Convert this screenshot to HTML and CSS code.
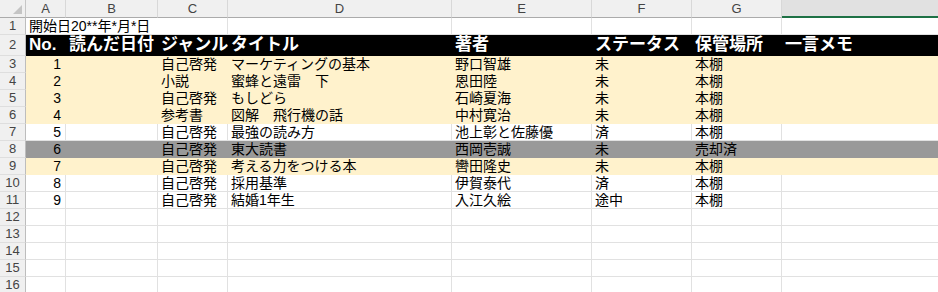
FILE: index.html
```html
<!DOCTYPE html>
<html lang="ja">
<head>
    <meta charset="UTF-8">
    <title>読書リスト</title>
    <link rel="stylesheet" href="styles.css">
</head>
<body>
    <div class="sheet" id="sheet">
        <div class="row col-head">
            <div class="corner"><span class="tri"></span></div>
            <div class="ch">A</div>
            <div class="ch">B</div>
            <div class="ch">C</div>
            <div class="ch">D</div>
            <div class="ch">E</div>
            <div class="ch">F</div>
            <div class="ch">G</div>
            <div class="ch selected"></div>
        </div>
        <div class="row">
            <div class="rh">1</div>
            <div class="cell span3">開始日20**年*月*日</div>
            <div class="cell"></div>
            <div class="cell"></div>
            <div class="cell"></div>
            <div class="cell"></div>
            <div class="cell last"></div>
        </div>
        <div class="row title">
            <div class="rh">2</div>
            <div class="cell">No.</div>
            <div class="cell">読んだ日付</div>
            <div class="cell">ジャンル</div>
            <div class="cell">タイトル</div>
            <div class="cell">著者</div>
            <div class="cell">ステータス</div>
            <div class="cell">保管場所</div>
            <div class="cell last">一言メモ</div>
        </div>
    </div>

    <script>
        const books = [
            [1, '自己啓発', 'マーケティングの基本', '野口智雄', '未', '本棚', 'cream'],
            [2, '小説', '蜜蜂と遠雷　下', '恩田陸', '未', '本棚', 'cream'],
            [3, '自己啓発', 'もしどら', '石崎夏海', '未', '本棚', 'cream'],
            [4, '参考書', '図解　飛行機の話', '中村寛治', '未', '本棚', 'cream'],
            [5, '自己啓発', '最強の読み方', '池上彰と佐藤優', '済', '本棚', ''],
            [6, '自己啓発', '東大読書', '西岡壱誠', '未', '売却済', 'sold'],
            [7, '自己啓発', '考える力をつける本', '轡田隆史', '未', '本棚', 'cream'],
            [8, '自己啓発', '採用基準', '伊賀泰代', '済', '本棚', ''],
            [9, '自己啓発', '結婚1年生', '入江久絵', '途中', '本棚', '']
        ];

        const sheet = document.getElementById('sheet');
        let rowNo = 3;

        function addRow(values, fill) {
            const row = document.createElement('div');
            row.className = 'row' + (fill ? ' ' + fill : '');
            let html = '<div class="rh">' + rowNo + '</div>';
            values.forEach((v, i) => {
                let cls = 'cell';
                if (i === 0) cls += ' num';
                if (i === values.length - 1) cls += ' last';
                html += '<div class="' + cls + '">' + v + '</div>';
            });
            row.innerHTML = html;
            sheet.appendChild(row);
            rowNo++;
        }

        books.forEach(b => {
            addRow([b[0], '', b[1], b[2], b[3], b[4], b[5], ''], b[6]);
        });

        // empty rows down to the bottom of the window
        while (rowNo <= 16) {
            addRow(['', '', '', '', '', '', '', ''], '');
        }
    </script>
</body>
</html>
```

FILE: styles.css
```css
:root {
    --grid-line: #e1e1e1;
    --head-bg: #f0f0f0;
    --head-text: #444;
    --cream: #fff2cc;
    --sold: #999999;
    --excel-green: #1e7145;
}

* {
    box-sizing: border-box;
    margin: 0;
    padding: 0;
}

body {
    background: #fff;
    overflow: hidden;
    font-family: "Liberation Sans", "Noto Sans CJK JP", sans-serif;
}

.sheet {
    width: 938px;
}

.row {
    display: grid;
    grid-template-columns: 26px 40px 92px 70px 224px 140px 100px 90px 1fr;
    height: 17px;
}

/* column letters */
.col-head {
    height: 18px;
}

.corner {
    position: relative;
    background: var(--head-bg);
    border-right: 1px solid #c6c6c6;
    border-bottom: 1px solid #ababab;
}

.corner .tri {
    position: absolute;
    right: 3px;
    bottom: 3px;
    width: 0;
    height: 0;
    border-left: 9px solid transparent;
    border-bottom: 9px solid #c4c4c4;
}

.ch {
    background: var(--head-bg);
    border-right: 1px solid #d8d8d8;
    border-bottom: 1px solid #ababab;
    color: var(--head-text);
    font-size: 13px;
    line-height: 17px;
    text-align: center;
}

.ch.selected {
    background: #e1e1e1;
    border-right: none;
    border-bottom: 2px solid var(--excel-green);
}

/* row numbers */
.rh {
    background: var(--head-bg);
    border-right: 1px solid #bdbdbd;
    border-bottom: 1px solid #dedede;
    color: var(--head-text);
    font-size: 13px;
    line-height: 16px;
    text-align: center;
}

.cell {
    border-right: 1px solid var(--grid-line);
    border-bottom: 1px solid var(--grid-line);
    padding: 0 3px;
    font-size: 14px;
    line-height: 16px;
    color: #000;
    white-space: nowrap;
}

.cell.num {
    text-align: right;
    padding-right: 4px;
}

.cell.last {
    border-right: none;
}

.span3 {
    grid-column: span 3;
}

/* header row */
.title {
    height: 21px;
}

.title .cell {
    background: #000;
    border-color: #000;
    color: #fff;
    font-size: 17px;
    font-weight: bold;
    line-height: 20px;
}

.title .rh {
    line-height: 20px;
}

.cream .cell {
    background: var(--cream);
    border-color: var(--cream);
}

.sold .cell {
    background: var(--sold);
    border-color: var(--sold);
}
```
